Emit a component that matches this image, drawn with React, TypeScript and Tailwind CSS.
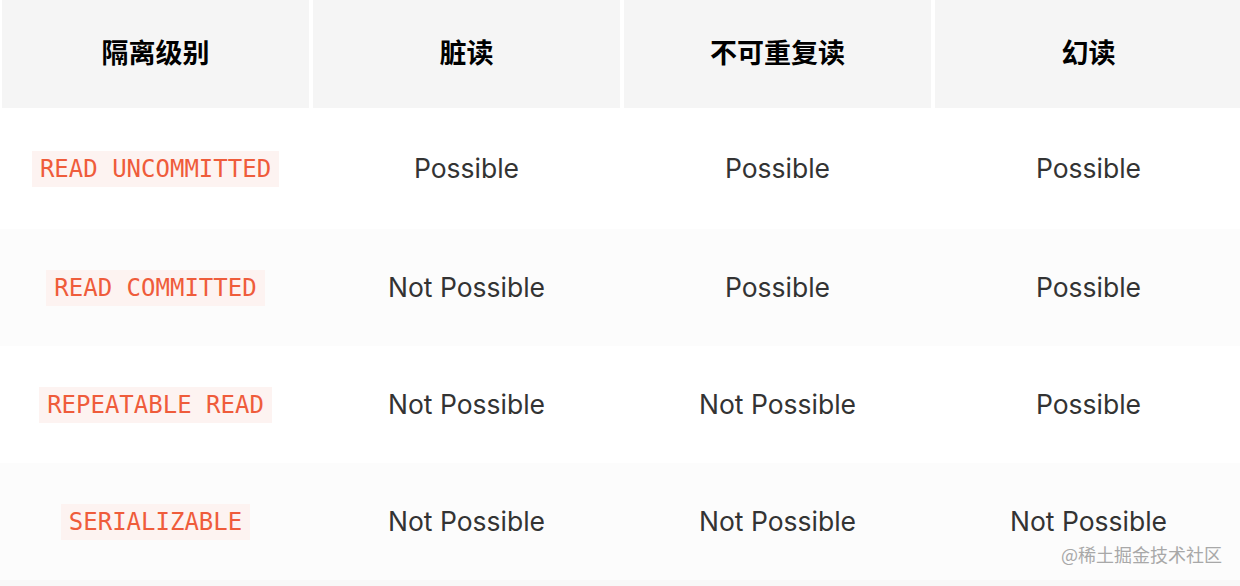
const levels = [
  { name: "READ UNCOMMITTED", dirty: "Possible", nonRepeat: "Possible", phantom: "Possible" },
  { name: "READ COMMITTED", dirty: "Not Possible", nonRepeat: "Possible", phantom: "Possible" },
  { name: "REPEATABLE READ", dirty: "Not Possible", nonRepeat: "Not Possible", phantom: "Possible" },
  { name: "SERIALIZABLE", dirty: "Not Possible", nonRepeat: "Not Possible", phantom: "Not Possible" },
];

const headers = ["隔离级别", "脏读", "不可重复读", "幻读"];

const sans = "font-['Inter','Noto_Sans_CJK_SC',sans-serif]";

const App = () => {
  return (
    <div className="relative w-[1240px] h-[586px] overflow-hidden bg-white">
      {/* header */}
      <div className="grid grid-cols-[repeat(4,307px)] gap-x-[4px] pl-[2px]">
        {headers.map((h) => (
          <div
            key={h}
            className={`h-[108px] flex items-center justify-center bg-[#f5f5f5] text-[27px] font-bold text-black ${sans}`}
          >
            {h}
          </div>
        ))}
      </div>

      {/* rows */}
      {levels.map((row, i) => {
        const h = i === 0 ? "h-[121px]" : "h-[117px]";
        const bg = i % 2 === 1 ? "bg-[#fcfcfc]" : "bg-white";
        return (
          <div
            key={row.name}
            className={`grid grid-cols-[repeat(4,307px)] gap-x-[4px] pl-[2px] ${bg}`}
          >
            <div className={`${h} flex items-center justify-center`}>
              <code className="px-[8px] py-[3px] bg-[#fdf3f1] text-[#ef5c3b] text-[24px] leading-[30px] font-['DejaVu_Sans_Mono',monospace]">
                {row.name}
              </code>
            </div>
            {[row.dirty, row.nonRepeat, row.phantom].map((v, j) => (
              <div
                key={j}
                className={`${h} flex items-center justify-center text-[26.5px] text-[#333333] ${sans}`}
              >
                {v}
              </div>
            ))}
          </div>
        );
      })}
      <div className="h-[6px] bg-[#f8f8f8]" />

      {/* watermark */}
      <div className="absolute right-[18px] bottom-[18px] text-[18px] text-[#a8a8a8] font-['Noto_Sans_CJK_SC',sans-serif]">
        @稀土掘金技术社区
      </div>
    </div>
  );
};

export default App;
